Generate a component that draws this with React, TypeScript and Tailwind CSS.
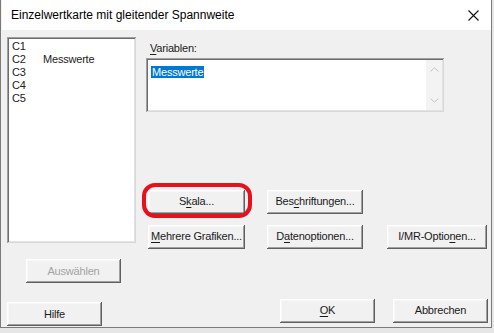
import type { ReactNode } from 'react';

const font = { fontFamily: '"Liberation Sans", Arial, sans-serif' };

const raised =
  'bg-[#f1f1f1] shadow-[inset_-1px_-1px_0_#5f5f5f,inset_1px_1px_0_#ffffff,inset_-2px_-2px_0_#a0a0a0,inset_2px_2px_0_#f8f8f8]';

const sunken =
  'bg-white shadow-[inset_1px_1px_0_#a0a0a0,inset_-1px_-1px_0_#d8d8d8,inset_2px_2px_0_#6d6d6d,inset_-2px_-2px_0_#e3e3e3]';

function Btn({
  children,
  w = 'w-[97px]',
  disabled,
  className = '',
}: {
  children: ReactNode;
  w?: string;
  disabled?: boolean;
  className?: string;
}) {
  return (
    <div
      className={`flex h-[24px] ${w} items-center justify-center text-[11px] tracking-[-0.2px] ${raised} ${
        disabled ? 'text-[#a3a3a3]' : 'text-[#1a1a1a]'
      } ${className}`}
    >
      {children}
    </div>
  );
}

const U = ({ c }: { c: string }) => <span className="underline underline-offset-2">{c}</span>;

const columns = ['C1', 'C2', 'C3', 'C4', 'C5'];

export default function App() {
  return (
    <div className="h-[333px] w-[494px] overflow-hidden bg-[#e6e6e6]" style={font}>
      <div className="flex h-[328px] w-[492px] flex-col border-x border-b border-[#7b7b7b] bg-[#f0f0f0] pl-[1px]">
        {/* title bar */}
        <div className="flex h-[30px] shrink-0 items-center justify-between bg-white pl-[9px] pr-[10px]">
          <span className="text-[12px] text-black">Einzelwertkarte mit gleitender Spannweite</span>
          <svg width="11" height="11" viewBox="0 0 11 11" className="mr-[2px]">
            <path d="M0.5 0.5 L10.5 10.5 M10.5 0.5 L0.5 10.5" stroke="#111" strokeWidth="1.1" />
          </svg>
        </div>

        <div className="flex flex-1 pt-[7px]">
          {/* left column */}
          <div className="ml-[5px] flex w-[129px] flex-col">
            <div className={`h-[206px] px-[5px] pt-[3px] text-[11px] tracking-[-0.2px] text-[#222] ${sunken}`}>
              {columns.map((c) => (
                <div key={c} className="flex h-[13px] items-center">
                  <span className="w-[31px]">{c}</span>
                  {c === 'C2' ? <span>Messwerte</span> : null}
                </div>
              ))}
            </div>
            <Btn disabled className="ml-[19px] mt-[16px] h-[23px]" w="w-[95px]">
              Auswählen
            </Btn>
            <Btn className="mt-[19px]" w="w-[95px]">
              Hilfe
            </Btn>
          </div>

          {/* right column */}
          <div className="ml-[10px] flex flex-1 flex-col">
            <div className="pl-[4px] pt-[3px] text-[11px] tracking-[-0.2px] text-[#222]">
              <U c="V" />
              ariablen:
            </div>
            <div className={`mt-[1px] flex h-[54px] w-[298px] ${sunken}`}>
              <div className="flex-1 pl-[5px] pt-[1px]">
                <span className="bg-[#0078d7] px-[1px] text-[11px] tracking-[-0.2px] text-white">Messwerte</span>
              </div>
              <div className="my-[2px] mr-[2px] flex w-[16px] flex-col items-center justify-between bg-[#f3f3f3] py-[7px]">
                <svg width="9" height="5" viewBox="0 0 9 5">
                  <path d="M0.5 4.5 L4.5 0.8 L8.5 4.5" stroke="#c4c4c4" fill="none" />
                </svg>
                <svg width="9" height="5" viewBox="0 0 9 5">
                  <path d="M0.5 0.5 L4.5 4.2 L8.5 0.5" stroke="#c4c4c4" fill="none" />
                </svg>
              </div>
            </div>

            <div className="ml-[2px] mt-[78px] flex gap-[22px]">
              <div className="relative">
                <Btn>
                  S<U c="k" />
                  ala...
                </Btn>
                <div className="absolute -bottom-[4px] -left-[6px] -right-[7px] -top-[7px] rounded-[13px] border-[4px] border-[#e8101c]" />
              </div>
              <Btn w="w-[96px]">
                Bes<U c="c" />
                hriftungen...
              </Btn>
            </div>

            <div className="ml-[2px] mt-[11px] flex gap-[22px]">
              <Btn>
                <U c="M" />
                ehrere Grafiken...
              </Btn>
              <Btn w="w-[96px]">
                D<U c="a" />
                tenoptionen...
              </Btn>
              <Btn w="w-[100px]" className="ml-[2px]">
                I/MR-Optio
                <U c="n" />
                en...
              </Btn>
            </div>

            <div className="ml-[134px] mt-[50px] flex gap-[18px]">
              <Btn w="w-[95px]">
                <U c="O" />K
              </Btn>
              <Btn w="w-[95px]">Abbrechen</Btn>
            </div>
          </div>
        </div>
      </div>
    </div>
  );
}
